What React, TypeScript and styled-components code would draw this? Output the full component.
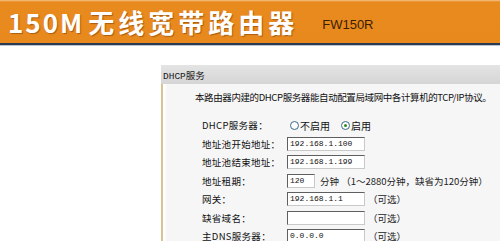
import React from "react";
import styled, { createGlobalStyle } from "styled-components";

const GlobalStyle = createGlobalStyle`
  html, body {
    margin: 0;
    padding: 0;
    background: #ffffff;
    overflow: hidden;
  }
  body {
    font-family: "Noto Sans CJK SC", "Liberation Sans", sans-serif;
  }
`;

const Page = styled.div`
  width: 500px;
  height: 241px;
  overflow: hidden;
  background: #ffffff;
`;

const Banner = styled.header`
  height: 43px;
  display: flex;
  align-items: center;
  padding-left: 8px;
  background: linear-gradient(#f3c48a 0, #e98a1f 2px, #e8891d 100%);
  border-bottom: 2px solid #2b3a52;
  box-shadow: 0 1px 0 #b9c6d6;
`;

const Title = styled.h1`
  margin: 0;
  color: #ffffff;
  font-family: "Noto Sans CJK SC", "Liberation Sans", sans-serif;
  font-size: 26px;
  font-weight: 700;
  letter-spacing: 4px;
  line-height: 1;
  text-shadow: 1px 1px 1px rgba(90, 40, 0, 0.45);
`;

const TitleLatin = styled.span`
  letter-spacing: 2px;
  margin-right: 4px;
`;

const Model = styled.span`
  margin-left: 24px;
  margin-top: 6px;
  color: #3b1d02;
  font-family: "Liberation Sans", Arial, sans-serif;
  font-size: 13px;
`;

const Main = styled.div`
  display: flex;
  padding-top: 20px;
`;

const Side = styled.div`
  width: 161px;
  flex: none;
`;

const Panel = styled.section`
  flex: 1;
  min-width: 0;
`;

const PanelHead = styled.div`
  height: 19px;
  display: flex;
  align-items: center;
  padding-left: 2px;
  background: linear-gradient(#e4e4e4, #d5d5d5);
  color: #1a1a1a;
  font-size: 9.5px;
  font-family: "Liberation Mono", "Noto Sans CJK SC", monospace;
`;

const PanelBody = styled.div`
  border-left: 2px solid #d9c391;
  background: linear-gradient(90deg, #ffffff 0, #ffffff 2px, #f6f6f7 4px);
  padding: 4px 0 20px 32px;
  color: #111;
`;

const Intro = styled.p`
  margin: 0 0 10px;
  font-size: 9.5px;
  line-height: 18px;
  white-space: nowrap;
  letter-spacing: -0.4px;
`;

const Form = styled.div`
  display: grid;
  grid-template-columns: 85px auto;
  grid-auto-rows: 18.5px;
  align-items: center;
  padding-left: 7px;
`;

const Label = styled.div`
  font-size: 9.5px;
  white-space: nowrap;
  letter-spacing: 0.3px;
`;

const Field = styled.div`
  display: flex;
  align-items: center;
  font-size: 9.5px;
  white-space: nowrap;
`;

const Input = styled.div<{ $w?: number }>`
  width: ${(p) => p.$w ?? 78}px;
  height: 14px;
  box-sizing: border-box;
  border: 1px solid #5f5f5f;
  border-right-color: #c9c9c9;
  border-bottom-color: #c9c9c9;
  background: #ffffff;
  padding-left: 2px;
  font-family: "Liberation Mono", monospace;
  font-size: 8px;
  line-height: 12px;
  color: #111;
`;

const Note = styled.span<{ $gap?: number }>`
  margin-left: ${(p) => p.$gap ?? 3}px;
  color: #222;
`;

const Radio = styled.span<{ $on?: boolean }>`
  width: 9px;
  height: 9px;
  box-sizing: border-box;
  border: 1px solid #3c6a8a;
  border-radius: 50%;
  background: #fff;
  display: inline-flex;
  align-items: center;
  justify-content: center;
  margin: 0 1px 0 3px;

  &::after {
    content: "";
    width: 3px;
    height: 3px;
    border-radius: 50%;
    background: ${(p) => (p.$on ? "#2e8a1e" : "transparent")};
  }
`;

const RadioText = styled.span`
  font-size: 10px;
  margin-right: 8px;
`;

export default function App() {
  return (
    <Page>
      <GlobalStyle />
      <Banner>
        <Title>
          <TitleLatin>150M</TitleLatin>无线宽带路由器
        </Title>
        <Model>FW150R</Model>
      </Banner>
      <Main>
        <Side />
        <Panel>
          <PanelHead>DHCP服务</PanelHead>
          <PanelBody>
            <Intro>本路由器内建的DHCP服务器能自动配置局域网中各计算机的TCP/IP协议。</Intro>
            <Form>
              <Label>DHCP服务器：</Label>
              <Field>
                <Radio />
                <RadioText>不启用</RadioText>
                <Radio $on />
                <RadioText>启用</RadioText>
              </Field>
              <Label>地址池开始地址：</Label>
              <Field>
                <Input>192.168.1.100</Input>
              </Field>
              <Label>地址池结束地址：</Label>
              <Field>
                <Input>192.168.1.199</Input>
              </Field>
              <Label>地址租期：</Label>
              <Field>
                <Input $w={28}>120</Input>
                <Note $gap={5}>分钟 （1～2880分钟，缺省为120分钟）</Note>
              </Field>
              <Label>网关：</Label>
              <Field>
                <Input>192.168.1.1</Input>
                <Note>（可选）</Note>
              </Field>
              <Label>缺省域名：</Label>
              <Field>
                <Input />
                <Note>（可选）</Note>
              </Field>
              <Label>主DNS服务器：</Label>
              <Field>
                <Input>0.0.0.0</Input>
                <Note>（可选）</Note>
              </Field>
            </Form>
          </PanelBody>
        </Panel>
      </Main>
    </Page>
  );
}
